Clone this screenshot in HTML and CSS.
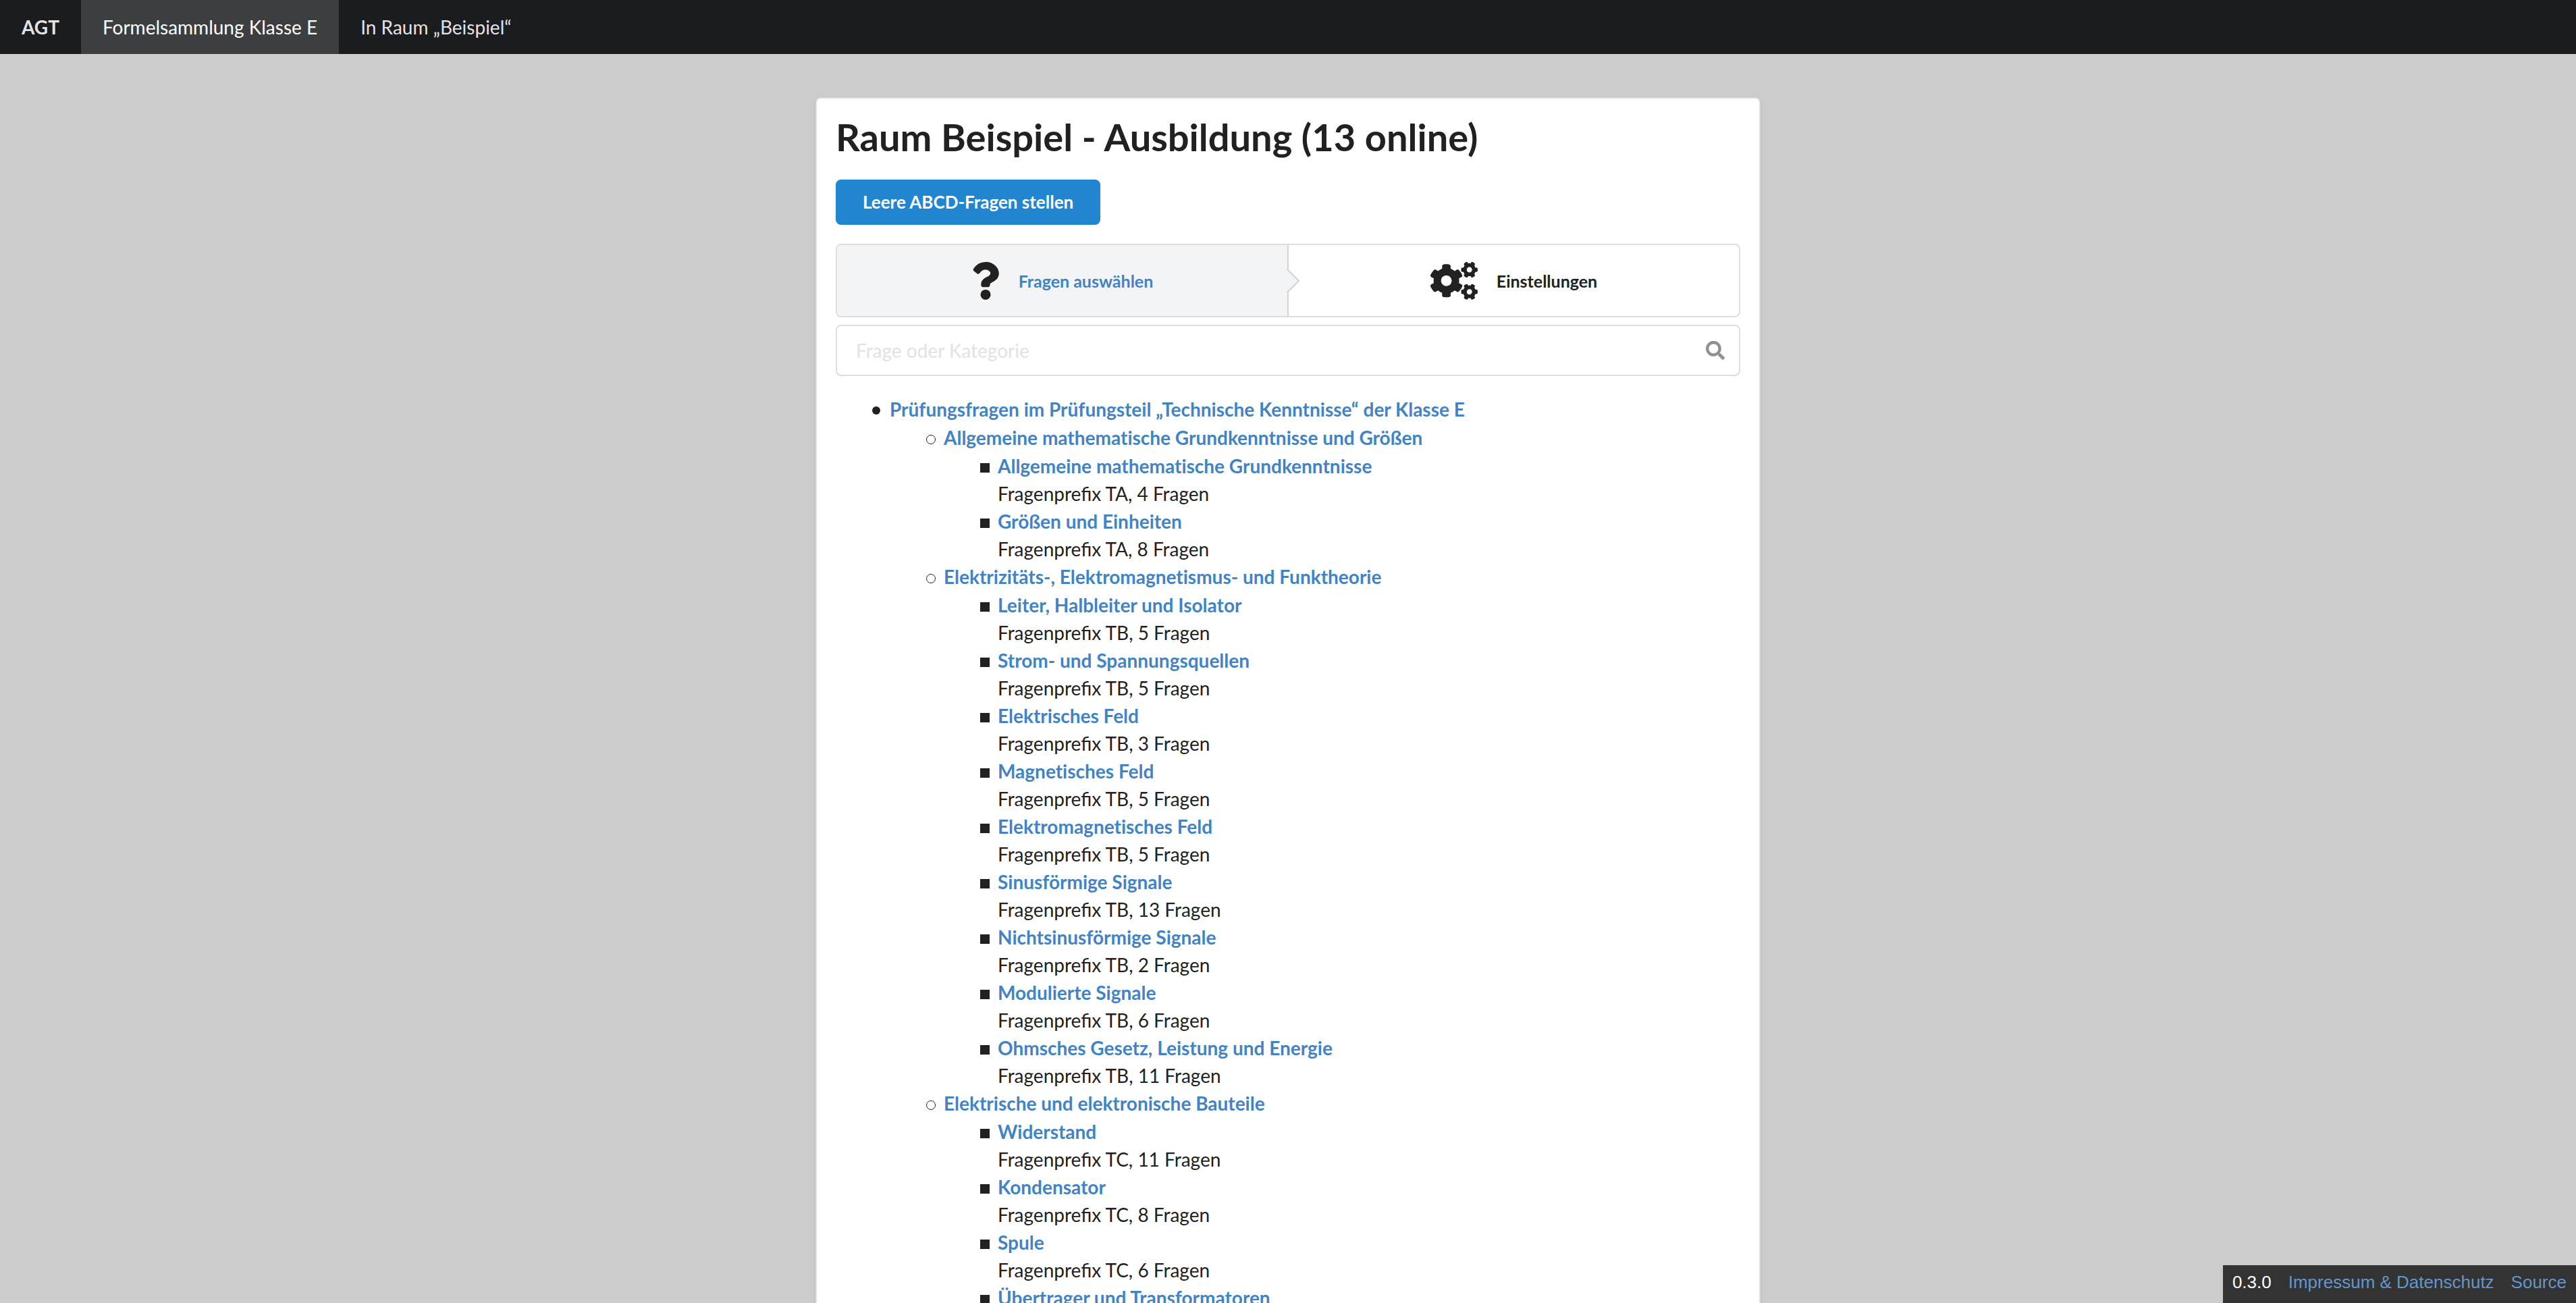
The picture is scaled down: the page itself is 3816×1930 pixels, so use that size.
FILE: index.html
```html
<!DOCTYPE html>
<html lang="de">
<head>
<meta charset="utf-8">
<meta name="viewport" content="width=device-width, initial-scale=1">
<title>AGT – Raum Beispiel</title>
<link rel="stylesheet" href="styles.css">
</head>
<body>
<nav class="menu">
  <a class="menu-item brand" href="#">AGT</a>
  <a class="menu-item active" href="#">Formelsammlung Klasse E</a>
  <a class="menu-item" href="#">In Raum „Beispiel“</a>
</nav>

<main class="segment">
  <h1 class="title">Raum Beispiel - Ausbildung (13 online)</h1>
  <button class="button" type="button">Leere ABCD-Fragen stellen</button>

  <div class="steps">
    <a class="step active" href="#">
      <svg class="step-icon question" viewBox="0 0 384 512" aria-hidden="true"><path d="M202 0C122 0 70 33 29 91c-7 11-5 25 5 33l43 33c10 8 25 6 33-4 25-31 43-49 81-49 30 0 67 19 67 48 0 22-18 33-47 50-35 19-80 44-80 104v10c0 13 11 24 24 24h72c13 0 24-11 24-24v-6c0-42 122-43 122-156C373 69 285 0 202 0zM192 374a69 69 0 1 0 0 138 69 69 0 0 0 0-138z"/></svg>
      <span>Fragen auswählen</span>
    </a>
    <a class="step" href="#">
      <svg class="step-icon cogs" viewBox="0 0 640 512" aria-hidden="true"><path d="M512.100 191.000l-8.200 14.300c-3 5.300-9.400 7.500-15.100 5.400-11.800-4.400-22.600-10.700-32.100-18.600-4.600-3.800-5.800-10.500-2.800-15.700l8.200-14.300c-6.900-8-12.300-17.300-15.900-27.400h-16.500c-6 0-11.200-4.300-12.200-10.300-2-12-2.100-24.600 0-37.100 1-6 6.200-10.400 12.200-10.400h16.500c3.600-10.100 9-19.400 15.900-27.400l-8.200-14.300c-3-5.200-1.900-11.900 2.800-15.700 9.500-7.900 20.400-14.200 32.100-18.600 5.700-2.100 12.100.1 15.100 5.400l8.200 14.300c10.500-1.900 21.200-1.900 31.700 0L552 6.300c3-5.300 9.400-7.500 15.100-5.400 11.800 4.400 22.600 10.700 32.100 18.600 4.600 3.800 5.800 10.500 2.800 15.700l-8.200 14.300c6.900 8 12.300 17.300 15.900 27.400h16.500c6 0 11.200 4.300 12.200 10.300 2 12 2.100 24.600 0 37.100-1 6-6.200 10.400-12.200 10.400h-16.500c-3.600 10.100-9 19.400-15.900 27.400l8.200 14.300c3 5.200 1.900 11.900-2.800 15.700-9.500 7.900-20.400 14.200-32.100 18.600-5.700 2.100-12.100-.1-15.100-5.400l-8.200-14.300c-10.400 1.900-21.200 1.900-31.700 0zm-10.500-58.800c38.500 29.600 82.400-14.300 52.800-52.800-38.500-29.700-82.400 14.300-52.800 52.800zM386.300 286.100l33.700 16.800c10.100 5.800 14.500 18.100 10.500 29.100-8.900 24.200-26.400 46.400-42.600 65.800-7.400 8.900-20.200 11.100-30.300 5.300l-29.100-16.800c-16 13.700-34.600 24.600-54.900 31.700v33.600c0 11.600-8.300 21.600-19.700 23.600-24.600 4.200-50.400 4.400-75.900 0-11.500-2-20-11.900-20-23.600V418c-20.300-7.200-38.900-18-54.900-31.700L74 403c-10 5.800-22.900 3.600-30.300-5.300-16.200-19.400-33.300-41.600-42.200-65.700-4-10.900.4-23.200 10.500-29.100l33.300-16.800c-3.900-20.900-3.900-42.400 0-63.400L12 205.800c-10.100-5.800-14.600-18.100-10.500-29 8.900-24.200 26-46.400 42.200-65.800 7.400-8.900 20.200-11.100 30.300-5.300l29.100 16.800c16-13.700 34.600-24.600 54.900-31.700V57.100c0-11.500 8.200-21.500 19.600-23.500 24.600-4.200 50.500-4.400 76-.1 11.500 2 20 11.900 20 23.600v33.600c20.300 7.200 38.900 18 54.900 31.700l29.100-16.800c10-5.800 22.900-3.600 30.300 5.300 16.200 19.400 33.200 41.600 42.100 65.800 4 10.900.1 23.200-10 29.100l-33.700 16.800c3.900 21 3.900 42.500 0 63.500zm-117.600 21.100c59.200-77-28.700-164.900-105.700-105.700-59.200 77 28.700 164.900 105.700 105.700zm243.400 182.700l-8.200 14.300c-3 5.300-9.400 7.500-15.100 5.400-11.800-4.400-22.600-10.700-32.100-18.600-4.600-3.800-5.800-10.500-2.800-15.700l8.200-14.300c-6.900-8-12.300-17.300-15.900-27.400h-16.500c-6 0-11.200-4.300-12.200-10.300-2-12-2.100-24.600 0-37.100 1-6 6.200-10.400 12.200-10.400h16.500c3.600-10.100 9-19.400 15.900-27.400l-8.200-14.300c-3-5.200-1.900-11.900 2.800-15.700 9.500-7.900 20.400-14.200 32.100-18.600 5.700-2.100 12.100.1 15.100 5.400l8.200 14.300c10.500-1.900 21.200-1.900 31.700 0l8.200-14.300c3-5.300 9.400-7.500 15.100-5.400 11.800 4.400 22.600 10.700 32.100 18.600 4.600 3.800 5.800 10.500 2.800 15.700l-8.200 14.300c6.900 8 12.300 17.300 15.900 27.400h16.500c6 0 11.200 4.300 12.200 10.300 2 12 2.100 24.600 0 37.100-1 6-6.200 10.400-12.200 10.400h-16.500c-3.600 10.100-9 19.400-15.900 27.400l8.200 14.300c3 5.200 1.900 11.900-2.800 15.700-9.500 7.900-20.400 14.200-32.100 18.600-5.700 2.100-12.100-.1-15.100-5.400l-8.200-14.300c-10.400 1.900-21.200 1.900-31.700 0zM501.600 431c38.500 29.600 82.400-14.300 52.800-52.800-38.500-29.600-82.400 14.300-52.800 52.800z"/></svg>
      <span>Einstellungen</span>
    </a>
  </div>

  <div class="search">
    <input class="search-input" type="text" placeholder="Frage oder Kategorie" aria-label="Frage oder Kategorie">
    <svg class="search-icon" viewBox="0 0 512 512" aria-hidden="true"><path d="M505 442.700L405.300 343c-4.500-4.500-10.600-7-17-7H372c27.600-35.300 44-79.700 44-128C416 93.100 322.900 0 208 0S0 93.100 0 208s93.100 208 208 208c48.300 0 92.700-16.400 128-44v16.300c0 6.400 2.500 12.500 7 17l99.700 99.700c9.400 9.400 24.600 9.400 33.900 0l28.300-28.300c9.400-9.400 9.400-24.600.1-34zM208 336c-70.700 0-128-57.200-128-128 0-70.700 57.200-128 128-128 70.700 0 128 57.200 128 128 0 70.700-57.200 128-128 128z"/></svg>
  </div>

  <ul class="tree">
    <li><a href="#">Prüfungsfragen im Prüfungsteil „Technische Kenntnisse“ der Klasse E</a>
      <ul>
        <li><a href="#">Allgemeine mathematische Grundkenntnisse und Größen</a>
          <ul>
            <li><a href="#">Allgemeine mathematische Grundkenntnisse</a><p>Fragenprefix TA, 4 Fragen</p></li>
            <li><a href="#">Größen und Einheiten</a><p>Fragenprefix TA, 8 Fragen</p></li>
          </ul>
        </li>
        <li><a href="#">Elektrizitäts-, Elektromagnetismus- und Funktheorie</a>
          <ul>
            <li><a href="#">Leiter, Halbleiter und Isolator</a><p>Fragenprefix TB, 5 Fragen</p></li>
            <li><a href="#">Strom- und Spannungsquellen</a><p>Fragenprefix TB, 5 Fragen</p></li>
            <li><a href="#">Elektrisches Feld</a><p>Fragenprefix TB, 3 Fragen</p></li>
            <li><a href="#">Magnetisches Feld</a><p>Fragenprefix TB, 5 Fragen</p></li>
            <li><a href="#">Elektromagnetisches Feld</a><p>Fragenprefix TB, 5 Fragen</p></li>
            <li><a href="#">Sinusförmige Signale</a><p>Fragenprefix TB, 13 Fragen</p></li>
            <li><a href="#">Nichtsinusförmige Signale</a><p>Fragenprefix TB, 2 Fragen</p></li>
            <li><a href="#">Modulierte Signale</a><p>Fragenprefix TB, 6 Fragen</p></li>
            <li><a href="#">Ohmsches Gesetz, Leistung und Energie</a><p>Fragenprefix TB, 11 Fragen</p></li>
          </ul>
        </li>
        <li><a href="#">Elektrische und elektronische Bauteile</a>
          <ul>
            <li><a href="#">Widerstand</a><p>Fragenprefix TC, 11 Fragen</p></li>
            <li><a href="#">Kondensator</a><p>Fragenprefix TC, 8 Fragen</p></li>
            <li><a href="#">Spule</a><p>Fragenprefix TC, 6 Fragen</p></li>
            <li><a href="#">Übertrager und Transformatoren</a></li>
          </ul>
        </li>
      </ul>
    </li>
  </ul>
</main>

<footer class="version">
  <span>0.3.0</span>
  <a href="#">Impressum &amp; Datenschutz</a>
  <a href="#">Source</a>
</footer>
</body>
</html>
```
FILE: styles.css
```css
* { box-sizing: border-box; }

body {
  margin: 0;
  height: 100vh;
  overflow: hidden;
  background: #ccc;
  color: #212121;
  font: 28px/40px Lato, sans-serif;
}

a { color: #4183c4; text-decoration: none; }

.menu {
  display: flex;
  height: 80px;
  background: #1b1c1d;
}

.menu-item {
  display: flex;
  align-items: center;
  padding: 0 32px;
  color: rgba(255, 255, 255, .9);
}

.menu-item.brand { font-weight: 700; }
.menu-item.active { background: #3d3e3f; color: #fff; }

.segment {
  max-width: 1400px;
  margin: 64px auto 0;
  padding: 21px 28px 28px;
  background: #fff;
  border: 2px solid #dededf;
  border-radius: 8px;
  box-shadow: 0 2px 4px rgba(34, 36, 38, .15);
}

.title {
  margin: 0 0 27px;
  font-size: 56px;
  line-height: 72px;
  font-weight: 700;
}

.button {
  display: block;
  height: 67px;
  padding: 0 40px 2px;
  border: 0;
  border-radius: 8px;
  background: #2185d0;
  color: #fff;
  font: 700 26px/26px Lato, sans-serif;
}

.steps {
  display: flex;
  margin: 28px 0 11px;
  border: 2px solid #dededf;
  border-radius: 8px;
}

.step {
  position: relative;
  flex: 1;
  display: flex;
  align-items: center;
  justify-content: center;
  gap: 28px;
  height: 105px;
  color: #212121;
  font-size: 25px;
  font-weight: 700;
}

.step.active {
  background: #f3f4f5;
  border-right: 2px solid #d4d4d5;
  border-radius: 6px 0 0 6px;
  color: #4183c4;
}

.step.active::after {
  content: "";
  position: absolute;
  top: 50%;
  right: 0;
  width: 24px;
  height: 24px;
  border: solid #d4d4d5;
  border-width: 0 2px 2px 0;
  background: #f3f4f5;
  transform: translate(50%, -50%) rotate(-45deg);
}

.step-icon { height: 56px; fill: #212121; }

.search { position: relative; }

.search-input {
  display: block;
  width: 100%;
  height: 76px;
  padding: 0 80px 0 28px;
  border: 2px solid #dededf;
  border-radius: 8px;
  background: #fff;
  color: inherit;
  font: inherit;
}

.search-input::placeholder { color: #e2e2e2; opacity: 1; }

.search-icon {
  position: absolute;
  top: 24px;
  right: 23px;
  width: 28px;
  height: 28px;
  fill: #909090;
}

.tree, .tree ul {
  margin: 0;
  padding-left: 80px;
  list-style: none;
}

.tree { margin-top: 28px; line-height: 42px; }
.tree li { position: relative; }
.tree a { font-weight: 700; font-variant-ligatures: none; }
.tree p { margin: 0; line-height: 40px; }

/* Bullets: disc, circle, square by depth */
.tree li::before {
  content: "";
  position: absolute;
  top: 17px;
  left: -26px;
  width: 12px;
  height: 12px;
  border-radius: 50%;
  background: #212121;
}

.tree ul li::before {
  border: 1px solid #212121;
  background: none;
}

.tree ul ul li::before {
  border-radius: 0;
  background: #212121;
}

.version {
  position: fixed;
  right: 0;
  bottom: 0;
  display: flex;
  gap: 25px;
  height: 56px;
  padding: 0 14px;
  background: #333;
  color: #fff;
  font: 26px/50px "Liberation Sans", Arial, sans-serif;
}

.version a { color: #6496c8; }
```
